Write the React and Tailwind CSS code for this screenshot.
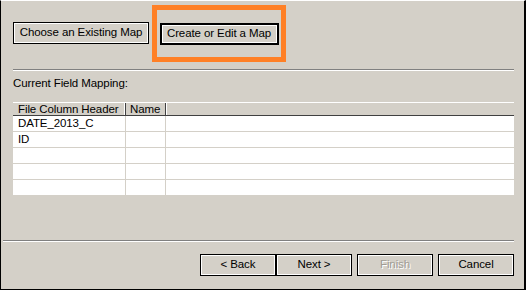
const font = { fontFamily: '"Liberation Sans", Arial, sans-serif' };

function WinButton({ children, isDefault, disabled, className = "" }) {
  return (
    <div
      className={`flex items-center justify-center bg-[#d4d0c8] leading-none ${
        isDefault ? "border-2" : "border"
      } border-black ${className}`}
    >
      <div className="flex h-full w-full items-center justify-center whitespace-nowrap border border-white">
        {disabled ? (
          <span className="text-[#a09c94] [text-shadow:1px_1px_0_#ffffff]">{children}</span>
        ) : (
          <span className="text-black">{children}</span>
        )}
      </div>
    </div>
  );
}

const rows = [
  ["DATE_2013_C", ""],
  ["ID", ""],
  ["", ""],
  ["", ""],
  ["", ""],
];

export default function App() {
  return (
    <div
      style={font}
      className="flex h-[290px] w-[526px] flex-col border-b border-l border-r-2 border-t border-b-black border-l-black border-r-black border-t-white bg-[#d4d0c8] text-[11.5px] tracking-[-0.1px] text-black"
    >
      {/* top choice buttons */}
      <div className="flex h-[68px] items-start pl-[12px] pt-[4px]">
        <WinButton className="mt-[17px] h-[22px] w-[136px]">Choose an Existing Map</WinButton>
        <div className="ml-[3px] flex h-[57px] w-[134px] items-center justify-center border-[5px] border-[#ff8026]">
          <WinButton isDefault className="h-[22px] w-[119px]">
            Create or Edit a Map
          </WinButton>
        </div>
      </div>

      {/* separator */}
      <div className="ml-[12px] w-[501px] border-b border-t border-b-white border-t-[#808080]" />

      <div className="ml-[12px] mt-[5px] leading-[14px]">Current Field Mapping:</div>

      {/* grid */}
      <div className="ml-[12px] mt-[12px] w-[501px]">
        <div className="flex h-[14px] border-b border-t border-b-[#404040] border-t-white bg-[#d4d0c8] leading-[12px]">
          <div className="w-[113px] whitespace-nowrap border-r border-r-[#404040] pl-[5px]">
            <div className="h-full border-r border-r-white">File Column Header</div>
          </div>
          <div className="w-[40px] border-r border-r-[#404040] pl-[4px]">
            <div className="h-full">Name</div>
          </div>
          <div className="flex-1 border-l border-l-white" />
        </div>
        {rows.map((r, i) => (
          <div key={i} className="flex h-[16px] border-b border-b-[#d4d0c8] bg-white leading-[15px]">
            <div className="w-[113px] whitespace-nowrap border-r border-r-[#d4d0c8] pl-[5px]">{r[0]}</div>
            <div className="w-[40px] border-r border-r-[#d4d0c8]">{r[1]}</div>
            <div className="flex-1" />
          </div>
        ))}
      </div>

      <div className="flex-1" />

      {/* bottom separator */}
      <div className="ml-[2px] w-[511px] border-b border-t border-b-white border-t-[#808080]" />

      <div className="flex h-[47px] items-start pl-[199px] pt-[12px]">
        <WinButton className="h-[22px] w-[76px]">&lt; Back</WinButton>
        <WinButton className="h-[22px] w-[76px]">Next &gt;</WinButton>
        <WinButton disabled className="ml-[5px] h-[22px] w-[76px]">
          Finish
        </WinButton>
        <WinButton className="ml-[5px] h-[22px] w-[76px]">Cancel</WinButton>
      </div>
    </div>
  );
}
